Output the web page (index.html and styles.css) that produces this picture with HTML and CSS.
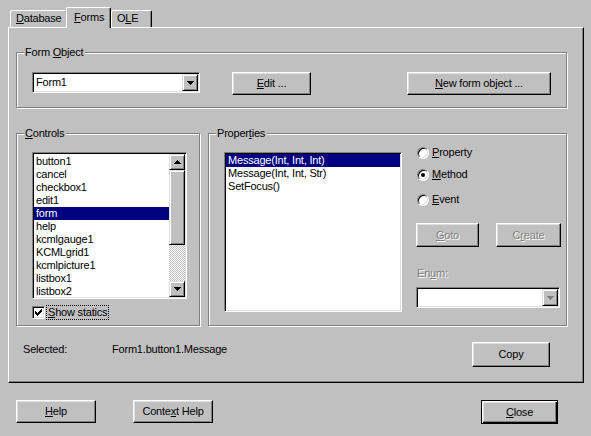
FILE: index.html
```html
<!DOCTYPE html>
<html lang="en">
<head>
<meta charset="utf-8">
<title>Forms</title>
<link rel="stylesheet" href="styles.css">
</head>
<body>
<div class="dialog">
  <div class="tabs">
    <div class="tab tab-db"><u>D</u>atabase</div>
    <div class="tab tab-active"><u>F</u>orms</div>
    <div class="tab tab-ole">O<u>L</u>E</div>
  </div>
  <div class="panel">
    <div class="group group-form">
      <span class="legend">Form <u>O</u>bject</span>
      <div class="combo combo-form">
        <span class="combo-text">Form1</span>
        <span class="drop-btn raised"><svg class="arrow" width="7" height="4" viewBox="0 0 7 4"><path d="M0 0h7v1H0zM1 1h5v1H1zM2 2h3v1H2zM3 3h1v1H3z"/></svg></span>
      </div>
      <button class="btn btn-edit"><u>E</u>dit ...</button>
      <button class="btn btn-new"><u>N</u>ew form object ...</button>
    </div>
    <div class="columns">
      <div class="group group-controls">
        <span class="legend"><u>C</u>ontrols</span>
        <div class="listbox list-controls">
          <ul class="items items-controls">
            <li>button1</li>
            <li>cancel</li>
            <li>checkbox1</li>
            <li>edit1</li>
            <li class="sel">form</li>
            <li>help</li>
            <li>kcmlgauge1</li>
            <li>KCMLgrid1</li>
            <li>kcmlpicture1</li>
            <li>listbox1</li>
            <li>listbox2</li>
          </ul>
          <div class="scrollbar">
            <span class="sb-btn raised"><svg class="arrow" width="7" height="4" viewBox="0 0 7 4"><path d="M3 0h1v1H3zM2 1h3v1H2zM1 2h5v1H1zM0 3h7v1H0z"/></svg></span>
            <span class="sb-thumb raised"></span>
            <span class="sb-track"></span>
            <span class="sb-btn raised"><svg class="arrow" width="7" height="4" viewBox="0 0 7 4"><path d="M0 0h7v1H0zM1 1h5v1H1zM2 2h3v1H2zM3 3h1v1H3z"/></svg></span>
          </div>
        </div>
        <div class="check">
          <span class="check-box"><svg class="tick" width="7" height="7" viewBox="0 0 7 7"><path d="M6 0h1v1H6zM5 1h2v1H5zM0 2h1v1H0zM4 2h3v1H4zM0 3h2v1H0zM3 3h3v1H3zM0 4h5v1H0zM1 5h3v1H1zM2 6h1v1H2z"/></svg></span>
          <span class="check-label"><u>S</u>how statics</span>
        </div>
      </div>
      <div class="group group-props">
        <span class="legend">Proper<u>t</u>ies</span>
        <div class="listbox list-props">
          <ul class="items">
            <li class="sel">Message(Int, Int, Int)</li>
            <li>Message(Int, Int, Str)</li>
            <li>SetFocus()</li>
          </ul>
        </div>
        <div class="prop-side">
          <div class="radio radio-1"><span class="radio-circle"></span><span class="radio-text"><u>P</u>roperty</span></div>
          <div class="radio radio-2"><span class="radio-circle"><span class="radio-dot"></span></span><span class="radio-text"><u>M</u>ethod</span></div>
          <div class="radio radio-3"><span class="radio-circle"></span><span class="radio-text"><u>E</u>vent</span></div>
          <div class="side-btns">
            <button class="btn btn-goto" disabled><u>G</u>oto</button>
            <button class="btn btn-create" disabled>C<u>r</u>eate</button>
          </div>
          <div class="enum-label disabled">En<u>u</u>m:</div>
          <div class="combo combo-enum">
            <span class="combo-text"></span>
            <span class="drop-btn raised"><svg class="arrow arrow-off" width="7" height="4" viewBox="0 0 7 4"><path d="M0 0h7v1H0zM1 1h5v1H1zM2 2h3v1H2zM3 3h1v1H3z"/></svg></span>
          </div>
        </div>
      </div>
    </div>
    <div class="selected-row">
      <span class="sel-label">Selected:</span>
      <span class="sel-value">Form1.button1.Message</span>
      <button class="btn btn-copy">Copy</button>
    </div>
  </div>
  <div class="footer">
    <button class="btn btn-help"><u>H</u>elp</button>
    <button class="btn btn-ctx">Conte<u>x</u>t Help</button>
    <button class="btn btn-close btn-default"><u>C</u>lose</button>
  </div>
</div>
</body>
</html>
```

FILE: styles.css
```css
* { box-sizing: border-box; }
html, body { margin: 0; padding: 0; }
body {
  background: #c0c0c0;
  font-family: "Liberation Sans", Arial, sans-serif;
  font-size: 11px;
  line-height: 13px;
  letter-spacing: -0.2px;
  color: #000;
  width: 591px;
  height: 436px;
  overflow: hidden;
}
u { text-decoration: underline; text-underline-offset: 1px; }

.dialog { padding: 7px 0 0 8px; }

/* tabs */
.tabs {
  display: flex;
  align-items: flex-end;
  height: 20px;
  padding-left: 2px;
  position: relative;
  z-index: 1;
}
.tab {
  height: 17px;
  padding: 0 0 0 5px;
  line-height: 14px;
  border: 1px solid #fff;
  border-bottom: 0;
  border-right-color: #000;
  border-radius: 2px 2px 0 0;
  box-shadow: inset -1px 0 #808080;
  background: #c0c0c0;
}
.tab-db { width: 58px; }
.tab-active {
  width: 45px;
  height: 21px;
  margin-bottom: -1px;
  margin-left: -2px;
  padding: 2px 0 0 7px;
  position: relative;
  z-index: 2;
}
.tab-ole { width: 41px; }

/* main panel */
.panel {
  width: 576px;
  height: 356px;
  border: 1px solid;
  border-color: #fff #000 #000 #fff;
  box-shadow: inset -1px -1px #808080;
  padding: 24px 16px 0 7px;
}

/* etched group boxes */
.group {
  position: relative;
  border: 1px solid #808080;
  box-shadow: inset 1px 1px #fff, 1px 1px #fff;
}
.legend {
  position: absolute;
  top: -7px;
  left: 7px;
  padding: 0 2px 0 1px;
  background: #c0c0c0;
}
.group-form {
  height: 56px;
  display: flex;
  align-items: flex-start;
  padding: 19px 0 0 15px;
}
.columns {
  display: flex;
  gap: 8px;
  margin-top: 25px;
}
.group-controls {
  width: 184px;
  height: 193px;
  padding: 18px 0 0 15px;
}
.group-props {
  width: 359px;
  height: 193px;
  padding: 12px 0 0 15px;
  display: flex;
  align-items: flex-start;
}

/* 3D primitives */
.raised {
  background: #c0c0c0;
  border: 1px solid;
  border-color: #dfdfdf #000 #000 #dfdfdf;
  box-shadow: inset 1px 1px #fff, inset -1px -1px #808080;
}
.arrow { display: block; shape-rendering: crispEdges; fill: #000; }
.arrow-off { fill: #808080; }

/* combo boxes */
.combo {
  display: flex;
  height: 21px;
  background: #fff;
  border: 1px solid;
  border-color: #808080 #fff #fff #808080;
  box-shadow: inset 1px 1px #000, inset -1px -1px #dfdfdf;
  padding: 1px;
}
.combo-form { width: 168px; }
.combo-text { flex: 1; padding-left: 2px; line-height: 17px; }
.drop-btn {
  width: 16px;
  height: 17px;
  display: flex;
  align-items: center;
  justify-content: center;
}

/* push buttons */
.btn {
  font: inherit;
  letter-spacing: inherit;
  color: #000;
  background: #c0c0c0;
  border: 1px solid;
  border-color: #fff #000 #000 #fff;
  box-shadow: inset -1px -1px #808080, inset 1px 1px #dfdfdf;
  padding: 0;
  margin: 0;
  height: 23px;
  line-height: 13px;
  text-align: center;
}
.btn[disabled] { color: #808080; text-shadow: 1px 1px #fff; }
.btn-default {
  border: 1px solid #000;
  box-shadow: inset 1px 1px #fff, inset -1px -1px #000, inset -2px -2px #808080, inset 2px 2px #dfdfdf;
}
.btn-edit { width: 79px; margin-left: 32px; }
.btn-new { width: 144px; margin-left: 96px; }

/* list boxes */
.listbox {
  display: flex;
  background: #fff;
  border: 1px solid;
  border-color: #808080 #fff #fff #808080;
  box-shadow: inset 1px 1px #000, inset -1px -1px #dfdfdf;
  padding: 1px;
  overflow: hidden;
}
.list-controls { width: 155px; height: 147px; }
.list-props { width: 178px; height: 160px; margin-top: 6px; }
.items {
  list-style: none;
  margin: 0;
  padding: 0;
  flex: 1;
  overflow: hidden;
}
.items-controls { padding-top: 1px; }
.items li {
  height: 13px;
  line-height: 13px;
  padding-left: 2px;
  white-space: nowrap;
}
.items li.sel { background: #000080; color: #fff; }

.scrollbar { width: 16px; display: flex; flex-direction: column; }
.sb-btn {
  height: 16px;
  display: flex;
  align-items: center;
  justify-content: center;
}
.sb-thumb { height: 75px; }
.sb-track {
  flex: 1;
  background: repeating-conic-gradient(#fff 0 25%, #c0c0c0 0 50%) 0 0 / 2px 2px;
}

/* checkbox */
.check { display: flex; align-items: center; margin-top: 6px; }
.check-box {
  width: 13px;
  height: 13px;
  background: #fff;
  border: 1px solid;
  border-color: #808080 #fff #fff #808080;
  box-shadow: inset 1px 1px #000, inset -1px -1px #dfdfdf;
  display: flex;
  align-items: center;
  justify-content: center;
}
.tick { display: block; shape-rendering: crispEdges; fill: #000; }
.check-label {
  margin-left: 1px;
  padding: 0 1px;
  border: 1px dotted #000;
}

/* right side of Properties */
.prop-side { margin-left: 14px; display: flex; flex-direction: column; }
.radio { display: flex; align-items: center; height: 13px; padding-left: 1px; }
.radio-2 { margin-top: 9px; }
.radio-3 { margin-top: 12px; }
.radio-circle {
  width: 12px;
  height: 12px;
  border-radius: 50%;
  background: #fff;
  border: 1px solid;
  border-color: #808080 #fff #fff #808080;
  box-shadow: inset 1px 1px #000, inset -1px -1px #dfdfdf;
  display: flex;
  align-items: center;
  justify-content: center;
}
.radio-dot { width: 4px; height: 4px; border-radius: 50%; background: #000; }
.radio-text { margin-left: 3px; }
.side-btns { display: flex; gap: 17px; margin-top: 17px; }
.btn-goto { width: 63px; height: 24px; }
.btn-create { width: 65px; height: 24px; }
.enum-label { margin-top: 20px; padding-left: 1px; }
.disabled { color: #808080; text-shadow: 1px 1px #fff; }
.combo-enum { width: 144px; margin-top: 7px; }

/* selected row */
.selected-row { display: flex; align-items: flex-start; margin-top: 16px; }
.sel-label { width: 89px; margin: 1px 0 0 7px; }
.sel-value { margin-top: 1px; }
.btn-copy { width: 78px; height: 25px; margin-left: auto; margin-right: 17px; }

/* footer */
.footer { display: flex; align-items: flex-start; margin-top: 17px; padding-left: 8px; }
.btn-help { width: 80px; }
.btn-ctx { width: 80px; margin-left: 37px; }
.btn-close { width: 77px; height: 24px; margin-left: auto; margin-right: 33px; }
```
